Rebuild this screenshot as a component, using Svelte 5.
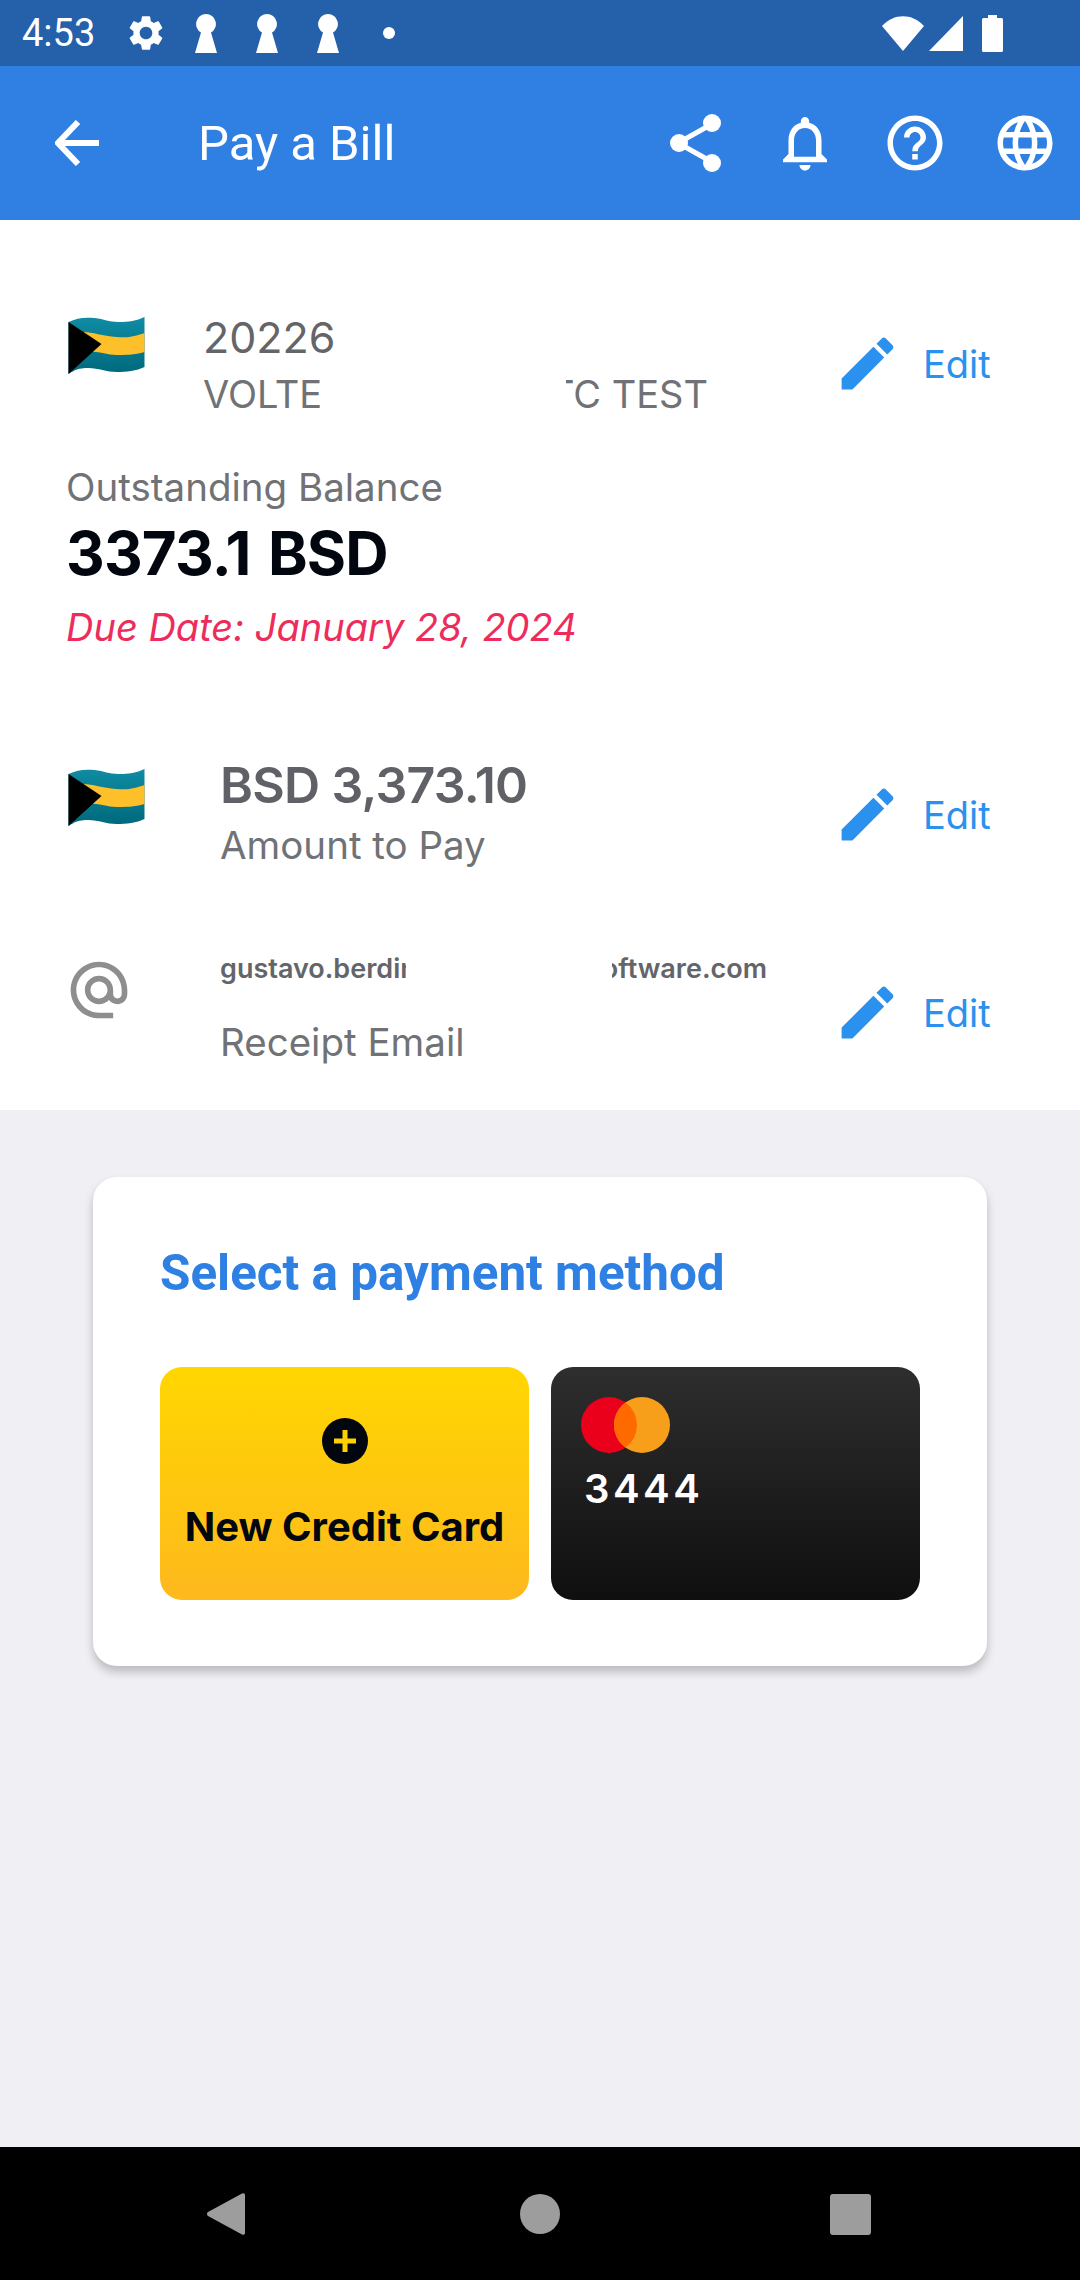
<script>
	const keyholes = [0, 1, 2];
</script>

{#snippet flag()}
	<svg class="flag" viewBox="0 0 76 58">
		<defs>
			<linearGradient id="teal" x1="0" y1="0" x2="0" y2="1">
				<stop offset="0" stop-color="#0f8ca3" />
				<stop offset="1" stop-color="#00687c" />
			</linearGradient>
		</defs>
		<path d="M0 5C8 1 16 0 26 1S40 5 50 5S68 4 76 0V50C68 54 58 55 48 55S30 51 20 51S6 53 0 57Z" fill="url(#teal)" />
		<path d="M15 15C24 15 34 19 48 20S66 19 76 16V35C66 38 56 38 48 38S30 34 15 34Z" fill="#fdc02b" />
		<path d="M0 5L33 27L0 57Z" fill="#000" />
	</svg>
{/snippet}

{#snippet edit()}
	<div class="edit">
		<svg viewBox="0 0 24 24" class="pencil"><path d="M3 17.25V21h3.75L17.81 9.94l-3.75-3.75L3 17.25zM20.71 7.04c.39-.39.39-1.02 0-1.41l-2.34-2.34c-.39-.39-1.02-.39-1.41 0l-1.83 1.83 3.75 3.75 1.83-1.83z" /></svg>
		<span>Edit</span>
	</div>
{/snippet}

<div class="screen">
	<div class="status">
		<span class="time">4:53</span>
		<svg class="gear" viewBox="0 0 24 24"><path d="M19.14 12.94c.04-.3.06-.61.06-.94 0-.32-.02-.64-.07-.94l2.03-1.58c.18-.14.23-.41.12-.61l-1.92-3.32c-.12-.22-.37-.29-.59-.22l-2.39.96c-.5-.38-1.03-.7-1.62-.94l-.36-2.54c-.04-.24-.24-.41-.48-.41h-3.84c-.24 0-.43.17-.47.41l-.36 2.54c-.59.24-1.13.57-1.62.94l-2.39-.96c-.22-.08-.47 0-.59.22L2.74 8.87c-.12.21-.08.47.12.61l2.03 1.58c-.05.3-.09.63-.09.94s.02.64.07.94l-2.03 1.58c-.18.14-.23.41-.12.61l1.92 3.32c.12.22.37.29.59.22l2.39-.96c.5.38 1.03.7 1.62.94l.36 2.54c.05.24.24.41.48.41h3.84c.24 0 .44-.17.47-.41l.36-2.54c.59-.24 1.13-.56 1.62-.94l2.39.96c.22.08.47 0 .59-.22l1.92-3.32c.12-.22.07-.47-.12-.61l-2.01-1.58zM12 15.6c-1.98 0-3.6-1.62-3.6-3.6s1.62-3.6 3.6-3.6 3.6 1.62 3.6 3.6-1.62 3.6-3.6 3.6z" /></svg>
		{#each keyholes as k}
			<svg class="keyhole" viewBox="0 0 22 39"><path d="M11 0a10 10 0 0 1 5 18.6L22 39H0L6 18.6A10 10 0 0 1 11 0Z" /></svg>
		{/each}
		<span class="dot"></span>
		<span class="grow"></span>
		<svg class="wifi" viewBox="0 0 42 35"><path d="M0 10C12 -3 30 -3 42 10L21 35Z" /></svg>
		<svg class="signal" viewBox="0 0 34 35"><path d="M34 0V35H0Z" /></svg>
		<svg class="battery" viewBox="0 0 21 37"><path d="M6 0H15V3H19.500A1.500 1.500 0 0 1 21 4.500V35.500A1.500 1.500 0 0 1 19.500 37H1.500A1.500 1.500 0 0 1 0 35.500V4.500A1.500 1.500 0 0 1 1.500 3H6Z" /></svg>
	</div>

	<header class="appbar">
		<svg class="back" viewBox="0 0 44 46"><path d="M44 23H4M23 2L3 23L23 44" /></svg>
		<h1>Pay a Bill</h1>
		<span class="grow"></span>
		<div class="actions">
			<svg viewBox="0 0 66 66"><path class="share-line" d="M50 14L16 33L50 52" /><circle cx="50" cy="13" r="9" /><circle cx="17" cy="33" r="9" /><circle cx="50" cy="53" r="9" /></svg>
			<svg viewBox="0 0 24 24"><path d="M12 22c1.100 0 2-.9 2-2h-4c0 1.100.9 2 2 2zm6-6v-5c0-3.070-1.630-5.640-4.500-6.320V4c0-.83-.67-1.500-1.500-1.500s-1.500.67-1.500 1.500v.68C7.640 5.360 6 7.920 6 11v5l-2 2v1h16v-1l-2-2zm-2 1H8v-6c0-2.480 1.510-4.500 4-4.500s4 2.020 4 4.500v6z" /></svg>
			<svg viewBox="0 0 24 24"><path d="M11 18h2v-2h-2v2zm1-16C6.480 2 2 6.480 2 12s4.480 10 10 10 10-4.480 10-10S17.520 2 12 2zm0 18c-4.410 0-8-3.590-8-8s3.590-8 8-8 8 3.590 8 8-3.590 8-8 8zm0-14c-2.210 0-4 1.790-4 4h2c0-1.100.9-2 2-2s2 .9 2 2c0 2-3 1.750-3 5h2c0-2.250 3-2.500 3-5 0-2.210-1.790-4-4-4z" /></svg>
			<svg viewBox="0 0 24 24"><path d="M11.990 2C6.470 2 2 6.480 2 12s4.470 10 9.990 10C17.520 22 22 17.520 22 12S17.520 2 11.990 2zm6.930 6h-2.950c-.32-1.250-.78-2.450-1.380-3.560 1.840.63 3.370 1.910 4.330 3.560zM12 4.040c.83 1.200 1.480 2.530 1.910 3.960h-3.820c.43-1.430 1.080-2.760 1.910-3.960zM4.260 14C4.100 13.360 4 12.690 4 12s.1-1.360.26-2h3.380c-.08.66-.14 1.320-.14 2 0 .68.06 1.340.14 2H4.260zm.82 2h2.950c.32 1.250.78 2.450 1.380 3.560-1.840-.63-3.370-1.900-4.330-3.560zm2.950-8H5.080c.96-1.660 2.490-2.930 4.330-3.560C8.810 5.550 8.350 6.750 8.030 8zM12 19.960c-.83-1.200-1.480-2.530-1.910-3.960h3.820c-.43 1.430-1.080 2.760-1.910 3.960zM14.340 14H9.660c-.09-.66-.16-1.320-.16-2 0-.68.07-1.350.16-2h4.680c.09.65.16 1.320.16 2 0 .68-.07 1.340-.16 2zm.25 5.560c.6-1.110 1.060-2.310 1.380-3.560h2.950c-.96 1.650-2.490 2.930-4.330 3.560zM16.360 14c.08-.66.14-1.320.14-2 0-.68-.06-1.340-.14-2h3.380c.16.64.26 1.310.26 2s-.1 1.360-.26 2h-3.380z" /></svg>
		</div>
	</header>

	<section class="details">
		<div class="row account">
			{@render flag()}
			<div class="texts">
				<div class="number">20226</div>
				<div class="split name">
					<span class="left">VOLTE</span>
					<span class="right"><span>TC TEST</span></span>
				</div>
			</div>
			{@render edit()}
		</div>

		<div class="balance">
			<div class="label">Outstanding Balance</div>
			<div class="total">3373.1 BSD</div>
			<div class="due">Due Date: January 28, 2024</div>
		</div>

		<div class="row amount">
			{@render flag()}
			<div class="texts wide">
				<div class="value">BSD 3,373.10</div>
				<div class="label">Amount to Pay</div>
			</div>
			{@render edit()}
		</div>

		<div class="row email">
			<svg class="at" viewBox="0 0 24 24"><path d="M12 2C6.480 2 2 6.480 2 12s4.480 10 10 10h5v-2h-5c-4.340 0-8-3.660-8-8s3.660-8 8-8 8 3.660 8 8v1.430c0 .79-.71 1.570-1.500 1.570s-1.500-.78-1.500-1.570V12c0-2.760-2.240-5-5-5s-5 2.240-5 5 2.240 5 5 5c1.380 0 2.640-.56 3.540-1.470.65.89 1.770 1.470 2.960 1.470 1.970 0 3.500-1.600 3.500-3.570V12c0-5.520-4.480-10-10-10zm0 13c-1.660 0-3-1.340-3-3s1.340-3 3-3 3 1.340 3 3-1.340 3-3 3z" /></svg>
			<div class="texts wide">
				<div class="split address">
					<span class="left">gustavo.berdin</span>
					<span class="right"><span>software.com</span></span>
				</div>
				<div class="label">Receipt Email</div>
			</div>
			{@render edit()}
		</div>
	</section>

	<main class="content">
		<div class="card">
			<h2>Select a payment method</h2>
			<div class="methods">
				<div class="tile add">
					<svg class="plus" viewBox="0 0 46 46"><circle cx="23" cy="23" r="23" /><path d="M23 12V34M12 23H34" /></svg>
					<span>New Credit Card</span>
				</div>
				<div class="tile saved">
					<svg class="mc" viewBox="0 0 89 56">
						<circle cx="28" cy="28" r="28" fill="#eb001b" />
						<circle cx="61" cy="28" r="28" fill="#f79e1b" />
						<path d="M44.500 5.400A28 28 0 0 1 44.500 50.600A28 28 0 0 1 44.500 5.400Z" fill="#ff6a00" />
					</svg>
					<span class="last4">3444</span>
				</div>
			</div>
		</div>
	</main>

	<nav class="navbar">
		<svg class="nav-back" viewBox="0 0 39 44"><path d="M36 1.500L2 20a2.500 2.500 0 0 0 0 4L36 42.500a2 2 0 0 0 3-2V3.500a2 2 0 0 0-3-2Z" /></svg>
		<span class="nav-home"></span>
		<span class="nav-recent"></span>
	</nav>
</div>

<style>
	:global(body) {
		margin: 0;
	}

	.screen {
		width: 1080px;
		height: 2280px;
		display: flex;
		flex-direction: column;
		background: #efeff4;
		font-family: Inter, sans-serif;
		overflow: hidden;
	}

	.grow {
		flex: 1;
	}

	svg {
		display: block;
		flex: none;
		fill: #fff;
	}

	.status {
		height: 66px;
		flex: none;
		box-sizing: border-box;
		padding: 0 77px 0 22px;
		display: flex;
		align-items: center;
		background: #2560ab;
		color: #fff;
	}

	.time {
		font: 400 38px Roboto, sans-serif;
		width: 103px;
	}

	.gear {
		width: 42px;
		height: 42px;
		margin-right: 28px;
	}

	.keyhole {
		width: 22px;
		height: 39px;
		margin-right: 39px;
	}

	.dot {
		width: 12px;
		height: 12px;
		border-radius: 50%;
		background: #fff;
		margin-left: 5px;
	}

	.wifi {
		width: 42px;
		height: 35px;
	}

	.signal {
		width: 34px;
		height: 35px;
		margin-left: 5px;
	}

	.battery {
		width: 21px;
		height: 37px;
		margin-left: 19px;
	}

	.appbar {
		height: 154px;
		flex: none;
		box-sizing: border-box;
		padding: 0 22px 0 55px;
		display: flex;
		align-items: center;
		background: #3080e3;
	}

	.back {
		width: 44px;
		height: 46px;
		fill: none;
		stroke: #fff;
		stroke-width: 6;
	}

	.appbar h1 {
		margin: 0 0 0 99px;
		font: 400 49px Roboto, sans-serif;
		color: #fff;
	}

	.actions {
		display: flex;
		gap: 44px;
	}

	.actions svg {
		width: 66px;
		height: 66px;
	}

	.share-line {
		fill: none;
		stroke: #fff;
		stroke-width: 5;
	}

	.details {
		height: 890px;
		flex: none;
		background: #fff;
		box-sizing: border-box;
		padding: 96px 87px 0 68px;
	}

	.row {
		display: flex;
		align-items: flex-start;
	}

	.flag {
		width: 77px;
		height: 58px;
	}

	.account .flag {
		margin-top: 1px;
	}

	.texts {
		margin-left: 58px;
		flex: 1;
		min-width: 0;
	}

	.texts.wide {
		margin-left: 75px;
	}

	.number {
		font-size: 43px;
		line-height: 42px;
		color: #636569;
	}

	.split {
		display: flex;
		white-space: nowrap;
	}

	.split .left,
	.split .right {
		display: block;
		overflow: hidden;
		flex: none;
	}

	.split .right {
		display: flex;
		justify-content: flex-end;
	}

	.name {
		font-size: 38px;
		line-height: 46px;
		margin-top: 13px;
		color: #707276;
	}

	.name .left {
		width: 120px;
	}

	.name .right {
		width: 142px;
		margin-left: 243px;
	}

	.edit {
		display: flex;
		align-items: center;
		flex: none;
		width: 160px;
		color: #2a91ee;
		font-size: 38px;
	}

	.pencil {
		width: 69px;
		height: 69px;
		fill: #2a91ee;
		margin-right: 21px;
	}

	.account .edit {
		margin-top: 13px;
	}

	.balance {
		margin: 47px 0 0 -2px;
	}

	.label {
		font-size: 38.500px;
		line-height: 46px;
		color: #707276;
	}

	.total {
		font-size: 60px;
		line-height: 72px;
		margin-top: 7px;
		font-weight: 700;
		color: #02060f;
		letter-spacing: -0.800px;
		word-spacing: 4px;
	}

	.due {
		font-size: 38px;
		line-height: 46px;
		margin-top: 15px;
		font-style: italic;
		color: #ee2c5c;
	}

	.amount {
		margin-top: 105px;
	}

	.amount .flag {
		margin-top: 14px;
	}

	.value {
		font-size: 50px;
		line-height: 60px;
		font-weight: 600;
		color: #5f6167;
		letter-spacing: -0.700px;
	}

	.amount .label {
		margin-top: 7px;
	}

	.amount .edit {
		margin-top: 25px;
	}

	.email {
		margin-top: 85px;
	}

	.at {
		width: 68px;
		height: 68px;
		fill: #8e8e8e;
		margin: 3px 0 0 -3px;
	}

	.email .texts {
		margin-left: 87px;
	}

	.email .edit {
		margin-top: 25px;
	}

	.address {
		font-size: 27px;
		line-height: 32px;
		font-weight: 600;
		color: #636569;
		margin-bottom: 34px;
	}

	.address .left {
		width: 186px;
	}

	.address .right {
		width: 155px;
		margin-left: 206px;
	}

	.content {
		flex: 1;
		padding: 67px 93px 0;
	}

	.card {
		box-sizing: border-box;
		height: 489px;
		padding: 63px 67px 0;
		background: #fff;
		border-radius: 24px;
		box-shadow: 0 6px 10px rgba(0, 0, 0, 0.22);
	}

	.card h2 {
		margin: 0;
		font: 700 49.400px/66px Roboto, sans-serif;
		color: #2f80e3;
	}

	.methods {
		display: grid;
		grid-template-columns: 1fr 1fr;
		gap: 22px;
		margin-top: 61px;
	}

	.tile {
		height: 233px;
		border-radius: 22px;
		box-sizing: border-box;
		display: flex;
		flex-direction: column;
	}

	.add {
		background: linear-gradient(#ffd600, #feb91e);
		align-items: center;
		padding-top: 51px;
		color: #02060f;
		font-size: 40px;
		font-weight: 700;
	}

	.plus {
		width: 46px;
		height: 46px;
		fill: #02060f;
		margin-bottom: 38px;
	}

	.plus path {
		stroke: #ffd000;
		stroke-width: 5;
		fill: none;
	}

	.saved {
		background: linear-gradient(#2e2e2e, #0f0f0f);
		padding: 30px 0 0 30px;
		color: #fff;
	}

	.mc {
		width: 89px;
		height: 56px;
	}

	.last4 {
		font-size: 40px;
		line-height: 48px;
		font-weight: 600;
		letter-spacing: 3.500px;
		margin: 12px 0 0 3px;
	}

	.navbar {
		height: 133px;
		flex: none;
		background: #000;
		position: relative;
	}

	.nav-back {
		position: absolute;
		left: 206px;
		top: 45px;
		width: 39px;
		height: 44px;
		fill: #9d9d9d;
	}

	.nav-home {
		position: absolute;
		left: 520px;
		top: 47px;
		width: 40px;
		height: 40px;
		border-radius: 50%;
		background: #9d9d9d;
	}

	.nav-recent {
		position: absolute;
		left: 830px;
		top: 47px;
		width: 41px;
		height: 41px;
		border-radius: 3px;
		background: #9d9d9d;
	}
</style>
